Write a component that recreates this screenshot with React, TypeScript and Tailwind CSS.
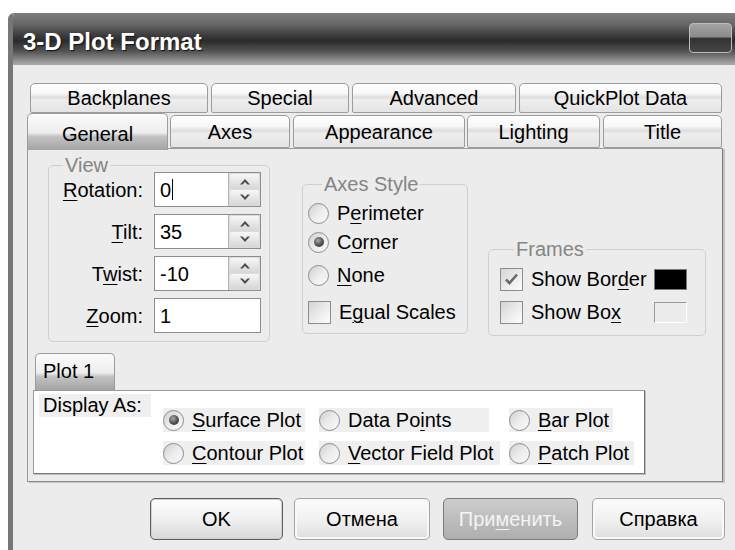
import React from "react";

const FONT = "[font-family:'Liberation_Sans',Arial,sans-serif]";

function U({ children }: { children: React.ReactNode }) {
  return <span className="underline decoration-1 underline-offset-[3px]">{children}</span>;
}

const tabBg =
  "bg-[linear-gradient(to_bottom,#ffffff_0%,#f7f7f7_34%,#dddddd_47%,#eeeeee_58%,#e3e3e3_100%)]";
const tabActiveBg =
  "bg-[linear-gradient(to_bottom,#fbfbfb_0%,#ededed_52%,#c2c2c2_63%,#a4a4a4_100%)]";

function Tab({ label, className }: { label: string; className: string }) {
  return (
    <div
      className={`rounded-t-[5px] rounded-b-[2px] border border-[#9c9c9c] ${tabBg} flex items-center justify-center text-[20px] text-black ${className}`}
    >
      {label}
    </div>
  );
}

function Radio({ checked }: { checked?: boolean }) {
  return (
    <span className="w-[21px] h-[21px] shrink-0 rounded-full border border-[#8c8c8c] bg-[linear-gradient(135deg,#cfcfcf_0%,#ececec_50%,#fbfbfb_100%)] flex items-center justify-center">
      {checked && (
        <span className="w-[10px] h-[10px] rounded-full bg-[radial-gradient(circle_at_40%_35%,#a8a8a8_0%,#505050_55%,#2a2a2a_100%)]" />
      )}
    </span>
  );
}

function Check({ checked }: { checked?: boolean }) {
  return (
    <span className="w-[23px] h-[23px] shrink-0 border border-[#8c8c8c] bg-[linear-gradient(135deg,#d4d4d4_0%,#ededed_55%,#fcfcfc_100%)] flex items-center justify-center">
      {checked && (
        <svg width="15" height="14" viewBox="0 0 15 14">
          <path d="M2 7.5 L5.5 11 L13 2.5" fill="none" stroke="#6a6a6a" strokeWidth="2.6" />
        </svg>
      )}
    </span>
  );
}

function Arrow({ up }: { up?: boolean }) {
  return (
    <svg width="12" height="7" viewBox="0 0 12 7">
      {up ? (
        <path d="M1 6.5 L6 1 L11 6.5 L8.5 6.5 L6 4 L3.5 6.5 Z" fill="#4c4c4c" />
      ) : (
        <path d="M1 0.5 L6 6 L11 0.5 L8.5 0.5 L6 3 L3.5 0.5 Z" fill="#4c4c4c" />
      )}
    </svg>
  );
}

function SpinInput({ value, caret }: { value: string; caret?: boolean }) {
  return (
    <div className="h-[35px] w-[107px] border border-[#8e8e8e] bg-white flex">
      <div className="flex-1 flex items-center pl-[5px] text-[20px] text-black">
        {value}
        {caret && <span className="w-[1px] h-[21px] bg-black ml-[1px]" />}
      </div>
      <div className="w-[32px] flex flex-col gap-[1px] p-[1px] bg-[#dcdcdc] border-l border-[#b4b4b4]">
        <div className="flex-1 rounded-[2px] bg-[linear-gradient(to_bottom,#f7f7f7,#d6d6d6)] flex items-center justify-center">
          <Arrow up />
        </div>
        <div className="flex-1 rounded-[2px] bg-[linear-gradient(to_bottom,#f7f7f7,#d6d6d6)] flex items-center justify-center">
          <Arrow />
        </div>
      </div>
    </div>
  );
}

function Btn({
  children,
  className,
}: {
  children: React.ReactNode;
  className: string;
}) {
  return (
    <div
      className={`h-[42px] rounded-[5px] flex items-center justify-center text-[20px] ${className}`}
    >
      {children}
    </div>
  );
}

const legendCls = "ml-[14px] px-[2px] leading-[14px] text-[20px] text-[#858585]";

export default function App() {
  return (
    <div className={`w-[735px] h-[550px] bg-white overflow-hidden ${FONT}`}>
      <div className="h-[13px]" />
      {/* dialog window */}
      <div className="ml-[8px] w-[740px] h-[537px] flex flex-col border-l-[5px] border-[#777777] rounded-tl-[6px] overflow-hidden">
        {/* caption */}
        <div className="h-[52px] shrink-0 flex items-start justify-between bg-[linear-gradient(to_bottom,#7e7e7e_0%,#666666_22%,#3a3a3a_44%,#2b2b2b_54%,#555555_74%,#acacac_100%)]">
          <div className="mt-[16px] ml-[10px] text-[24px] leading-[26px] font-bold text-white [text-shadow:1px_1px_1px_#111]">
            3-D Plot Format
          </div>
          <div className="mt-[10px] mr-[16px] w-[43px] h-[30px] rounded-[4px] border border-[#bdbdbd] bg-[linear-gradient(to_bottom,#a4a4a4_0%,#8a8a8a_45%,#333333_52%,#464646_100%)]" />
        </div>

        {/* client area */}
        <div className="flex-1 bg-[#ececec] flex flex-col pt-[18px]">
          {/* back tab row */}
          <div className="ml-[17px] h-[30px] flex gap-[3px]">
            <Tab label="Backplanes" className="w-[178px] h-[30px]" />
            <Tab label="Special" className="w-[138px] h-[30px]" />
            <Tab label="Advanced" className="w-[164px] h-[30px]" />
            <Tab label="QuickPlot Data" className="w-[203px] h-[30px]" />
          </div>
          {/* front tab row */}
          <div className="ml-[14px] mt-[2px] h-[33px] flex items-end">
            <div
              className={`relative z-10 w-[141px] h-[37px] -mb-[2px] rounded-t-[5px] border border-b-0 border-[#9c9c9c] ${tabActiveBg} flex items-start justify-center pt-[5px] text-[20px] text-black`}
            >
              General
            </div>
            <Tab label="Axes" className="ml-[2px] w-[120px] h-[33px]" />
            <Tab label="Appearance" className="ml-[3px] w-[172px] h-[33px]" />
            <Tab label="Lighting" className="ml-[2px] w-[133px] h-[33px]" />
            <Tab label="Title" className="ml-[3px] w-[119px] h-[33px]" />
          </div>

          {/* tab page */}
          <div className="ml-[14px] w-[696px] h-[334px] border border-[#9a9a9a] border-r-[#7c7c7c] border-b-[#8a8a8a] shadow-[2px_1px_0_#c4c4c4] bg-[#ececec] flex flex-col">
            <div className="flex items-start pl-[20px]">
              {/* View */}
              <fieldset className="mt-[9px] w-[222px] border border-[#cfcfcf] rounded-[5px] pr-[8px] pb-[8px]">
                <legend className={legendCls}>View</legend>
                <div className="grid grid-cols-[94px_107px] gap-x-[11px] gap-y-[7px] items-center text-[20px] text-black">
                  <div className="text-right">
                    <U>R</U>otation:
                  </div>
                  <SpinInput value="0" caret />
                  <div className="text-right">
                    <U>T</U>ilt:
                  </div>
                  <SpinInput value="35" />
                  <div className="text-right">
                    T<U>w</U>ist:
                  </div>
                  <SpinInput value="-10" />
                  <div className="text-right">
                    <U>Z</U>oom:
                  </div>
                  <div className="h-[35px] w-[107px] border border-[#8e8e8e] bg-white flex items-center pl-[5px]">
                    1
                  </div>
                </div>
              </fieldset>

              {/* Axes Style */}
              <fieldset className="ml-[32px] mt-[28px] w-[166px] border border-[#cfcfcf] rounded-[5px] px-[5px] pb-[7px]">
                <legend className={legendCls}>Axes Style</legend>
                <div className="flex flex-col text-[20px] text-black">
                  <div className="mt-[8px] h-[28px] flex items-center gap-[8px]">
                    <Radio />
                    <span>
                      P<U>e</U>rimeter
                    </span>
                  </div>
                  <div className="mt-[1px] h-[28px] flex items-center gap-[8px]">
                    <Radio checked />
                    <span>
                      C<U>o</U>rner
                    </span>
                  </div>
                  <div className="mt-[5px] h-[28px] flex items-center gap-[8px]">
                    <Radio />
                    <span>
                      <U>N</U>one
                    </span>
                  </div>
                  <div className="mt-[9px] h-[28px] flex items-center gap-[8px]">
                    <Check />
                    <span>
                      E<U>g</U>ual Scales
                    </span>
                  </div>
                </div>
              </fieldset>

              {/* Frames */}
              <fieldset className="ml-[20px] mt-[93px] w-[218px] border border-[#cfcfcf] rounded-[5px] pl-[11px] pr-[18px] pb-[9px]">
                <legend className={legendCls}>Frames</legend>
                <div className="flex flex-col text-[20px] text-black">
                  <div className="mt-[9px] h-[28px] flex items-center">
                    <Check checked />
                    <span className="ml-[8px] flex-1">
                      Show Bor<U>d</U>er
                    </span>
                    <span className="w-[33px] h-[21px] bg-black border border-[#7a7a7a]" />
                  </div>
                  <div className="mt-[5px] h-[28px] flex items-center">
                    <Check />
                    <span className="ml-[8px] flex-1">
                      Show Bo<U>x</U>
                    </span>
                    <span className="w-[33px] h-[21px] bg-[#ececec] border border-[#9a9a9a] border-r-white border-b-white" />
                  </div>
                </div>
              </fieldset>
            </div>

            {/* plot sub-tabs */}
            <div className="ml-[7px] mt-[11px]">
              <div
                className={`w-[80px] h-[37px] rounded-t-[5px] border border-b-0 border-[#9c9c9c] ${tabActiveBg} pl-[7px] pt-[6px] text-[20px] leading-[22px] text-black`}
              >
                Plot 1
              </div>
            </div>
            <div className="ml-[5px] w-[612px] h-[84px] bg-white border border-[#9a9a9a] border-r-[#6e6e6e] border-b-[#7a7a7a] shadow-[1px_1px_0_#bdbdbd] flex items-start text-[20px] text-black">
              <div className="ml-[5px] mt-[3px] w-[112px] h-[23px] leading-[23px] bg-[#efefef] pl-[4px] whitespace-nowrap">
                Display As:
              </div>
              <div className="ml-[12px] mt-[17px] grid grid-cols-[156px_190px_130px] gap-y-[9px] whitespace-nowrap">
                <div className="w-[142px] h-[24px] bg-[#efefef] flex items-center gap-[8px]">
                  <Radio checked />
                  <span>
                    <U>S</U>urface Plot
                  </span>
                </div>
                <div className="w-[170px] h-[24px] bg-[#efefef] flex items-center gap-[8px]">
                  <Radio />
                  <span>
                    Data Po<U>i</U>nts
                  </span>
                </div>
                <div className="w-[104px] h-[24px] bg-[#efefef] flex items-center gap-[8px]">
                  <Radio />
                  <span>
                    <U>B</U>ar Plot
                  </span>
                </div>
                <div className="w-[142px] h-[24px] bg-[#efefef] flex items-center gap-[8px]">
                  <Radio />
                  <span>
                    <U>C</U>ontour Plot
                  </span>
                </div>
                <div className="w-[181px] h-[24px] bg-[#efefef] flex items-center gap-[8px]">
                  <Radio />
                  <span>
                    <U>V</U>ector Field Plot
                  </span>
                </div>
                <div className="w-[125px] h-[24px] bg-[#efefef] flex items-center gap-[8px]">
                  <Radio />
                  <span>
                    <U>P</U>atch Plot
                  </span>
                </div>
              </div>
            </div>
          </div>

          {/* dialog buttons */}
          <div className="mt-[16px] ml-[137px] flex">
            <Btn className="w-[133px] border border-[#5e5e5e] bg-[linear-gradient(to_bottom,#fdfdfd_0%,#f0f0f0_50%,#d8d8d8_100%)] text-black shadow-[inset_0_0_0_1px_#d0d0d0]">
              OK
            </Btn>
            <Btn className="ml-[11px] w-[136px] border border-[#a4a4a4] bg-[linear-gradient(to_bottom,#fdfdfd_0%,#f1f1f1_50%,#dedede_100%)] text-black shadow-[inset_0_0_0_2px_#f8f8f8]">
              Отмена
            </Btn>
            <Btn className="ml-[13px] w-[135px] border border-[#7c7c7c] bg-[linear-gradient(to_bottom,#cdcdcd_0%,#bdbdbd_50%,#afafaf_100%)] text-[#f4f4f4]">
              <span>
                При<U>м</U>енить
              </span>
            </Btn>
            <Btn className="ml-[14px] w-[133px] border border-[#a4a4a4] bg-[linear-gradient(to_bottom,#fdfdfd_0%,#f1f1f1_50%,#dedede_100%)] text-black shadow-[inset_0_0_0_2px_#f8f8f8]">
              Справка
            </Btn>
          </div>
        </div>
      </div>
    </div>
  );
}
